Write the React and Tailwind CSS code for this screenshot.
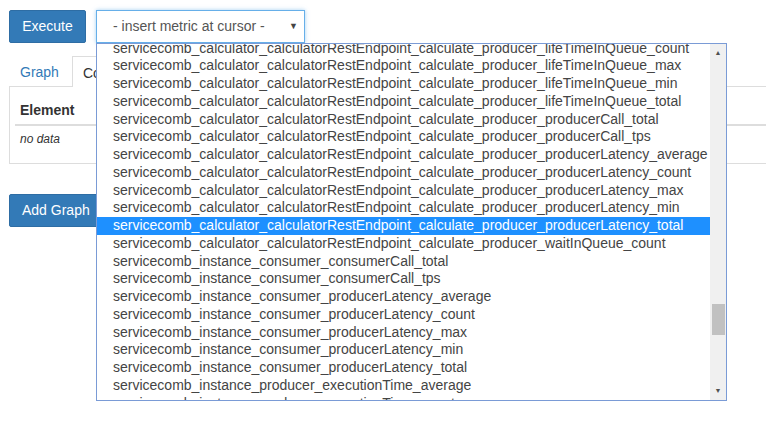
import React from 'react';

const calc = 'servicecomb_calculator_calculatorRestEndpoint_calculate_producer_';
const inst = 'servicecomb_instance_';

const metrics = [
    calc + 'lifeTimeInQueue_count',
    calc + 'lifeTimeInQueue_max',
    calc + 'lifeTimeInQueue_min',
    calc + 'lifeTimeInQueue_total',
    calc + 'producerCall_total',
    calc + 'producerCall_tps',
    calc + 'producerLatency_average',
    calc + 'producerLatency_count',
    calc + 'producerLatency_max',
    calc + 'producerLatency_min',
    calc + 'producerLatency_total',
    calc + 'waitInQueue_count',
    inst + 'consumer_consumerCall_total',
    inst + 'consumer_consumerCall_tps',
    inst + 'consumer_producerLatency_average',
    inst + 'consumer_producerLatency_count',
    inst + 'consumer_producerLatency_max',
    inst + 'consumer_producerLatency_min',
    inst + 'consumer_producerLatency_total',
    inst + 'producer_executionTime_average',
    inst + 'producer_executionTime_count',
];

const SELECTED = calc + 'producerLatency_total';

const MetricList = () => (
    <div className="absolute left-0 top-[33px] w-[631px] h-[358px] bg-white border border-[#7a9bd6] flex overflow-hidden z-10">
        <div className="flex-1 overflow-hidden">
            <div className="-mt-[4.5px]">
                {metrics.map((m) => (
                    <div
                        key={m}
                        className={
                            m === SELECTED
                                ? 'h-[17.75px] leading-[17.75px] pl-[16px] whitespace-nowrap bg-[#1e90ff] text-white'
                                : 'h-[17.75px] leading-[17.75px] pl-[16px] whitespace-nowrap text-[#444]'
                        }
                    >
                        {m}
                    </div>
                ))}
            </div>
        </div>
        {/* scrollbar */}
        <div className="w-[16px] bg-[#f0f0f0] relative">
            <div className="absolute top-[5px] left-0 w-full flex justify-center text-[7px] leading-none text-[#505050]">▲</div>
            <div className="absolute top-[260px] left-[2px] w-[13px] h-[31px] bg-[#c1c1c1]" />
            <div className="absolute bottom-[6px] left-0 w-full flex justify-center text-[7px] leading-none text-[#505050]">▼</div>
        </div>
    </div>
);

const App = () => {
    return (
        <div className="relative w-[766px] h-[438px] overflow-hidden bg-white text-[14px] text-[#333] font-['Liberation_Sans',Arial,sans-serif]">
            <div className="flex gap-[10px] pl-[9px] pt-[10px]">
                <button className="w-[77px] h-[33px] bg-[#337ab7] border border-[#2e6da4] rounded-[2px] text-white text-[14px]">
                    Execute
                </button>
                <div className="relative w-[209px] h-[33px]">
                    <div className="h-full border border-[#66afe9] shadow-[0_0_4px_rgba(102,175,233,0.6)] bg-white flex items-center pl-[16px] pr-[6px] text-[#555]">
                        <span className="flex-1">- insert metric at cursor -</span>
                        <span className="text-[9px] text-[#444]">▼</span>
                    </div>
                    <MetricList />
                </div>
            </div>

            {/* tabs */}
            <div className="flex pl-[10px] mt-[12px] h-[31px]">
                <div className="w-[62px] pl-[10px] pt-[3px] flex items-center text-[#337ab7]">Graph</div>
                <div className="w-[120px] pl-[10px] pt-[3px] flex items-center border border-b-0 border-[#ddd] bg-white relative top-[1px] h-[31px]">
                    Configuration
                </div>
            </div>
            <div className="ml-[9px] w-[800px] h-[78px] border border-r-0 border-[#ddd] pl-[5px] pt-[7px]">
                <div className="flex flex-col">
                    <div className="h-[32px] pl-[5px] pt-[6px] font-bold leading-[20px] border-b-2 border-[#ddd]">Element</div>
                    <div className="pl-[5px] pt-[5px] text-[12px] italic leading-[16px]">no data</div>
                </div>
            </div>

            <div className="pl-[9px] mt-[30px]">
                <button className="w-[92px] h-[33px] bg-[#337ab7] border border-[#2e6da4] rounded-[2px] text-white text-[14px] text-left pl-[12px]">
                    Add Graph
                </button>
            </div>
        </div>
    );
};

export default App;
